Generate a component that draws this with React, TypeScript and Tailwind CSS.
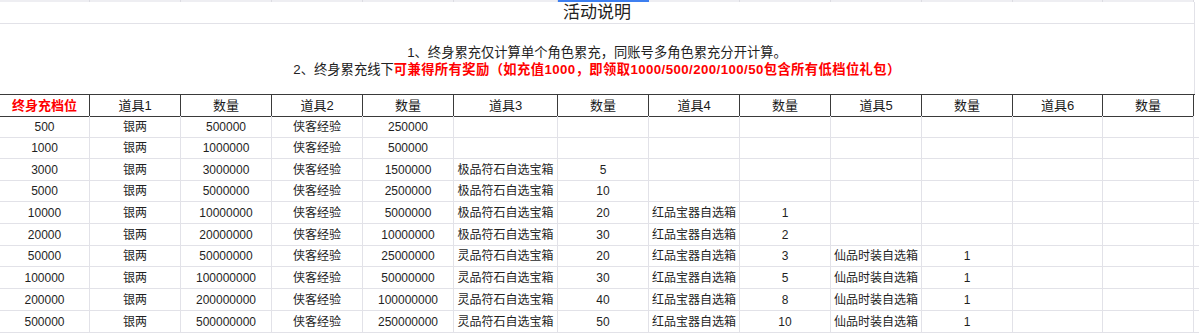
import React from "react";

const widths = [90, 91, 91, 91, 91, 104, 91, 91, 91, 91, 91, 90, 91];
const headers = ["终身充档位", "道具1", "数量", "道具2", "数量", "道具3", "数量", "道具4", "数量", "道具5", "数量", "道具6", "数量"];
const heights = [22, 21, 22, 21, 22, 22, 21, 22, 22, 22];

const J = "极品符石自选宝箱";
const L = "灵品符石自选宝箱";
const H = "红品宝器自选箱";
const X = "仙品时装自选箱";

const rows: string[][] = [
  ["500", "银两", "500000", "侠客经验", "250000"],
  ["1000", "银两", "1000000", "侠客经验", "500000"],
  ["3000", "银两", "3000000", "侠客经验", "1500000", J, "5"],
  ["5000", "银两", "5000000", "侠客经验", "2500000", J, "10"],
  ["10000", "银两", "10000000", "侠客经验", "5000000", J, "20", H, "1"],
  ["20000", "银两", "20000000", "侠客经验", "10000000", J, "30", H, "2"],
  ["50000", "银两", "50000000", "侠客经验", "25000000", L, "20", H, "3", X, "1"],
  ["100000", "银两", "100000000", "侠客经验", "50000000", L, "30", H, "5", X, "1"],
  ["200000", "银两", "200000000", "侠客经验", "100000000", L, "40", H, "8", X, "1"],
  ["500000", "银两", "500000000", "侠客经验", "250000000", L, "50", H, "10", X, "1"],
];

const font = { fontFamily: '"Liberation Sans", "Noto Sans CJK SC", sans-serif' };

export default function App() {
  return (
    <div className="w-[1199px] h-[336px] overflow-hidden bg-white text-[#1f1f1f]" style={font}>
      {/* column strip */}
      <div className="flex h-[2px]">
        {widths.map((w, i) => (
          <div
            key={i}
            style={{ width: w }}
            className={i === 6 ? "h-[2px] bg-[#3d7ff0]" : "h-[2px] bg-[#eeeef2] border-r border-[#dcdce2]"}
          />
        ))}
      </div>
      {/* title */}
      <div className="w-[1195px] h-[22px] border-b border-r border-[#e2e2e8] flex items-center justify-center text-[17px] leading-none text-[#222]">
        活动说明
      </div>
      {/* notes */}
      <div className="w-[1195px] h-[70px] border-r border-[#e2e2e8] flex flex-col items-center justify-center pt-[3px] text-[13.3px] leading-[17px] text-[#222]">
        <div>1、终身累充仅计算单个角色累充，同账号多角色累充分开计算。</div>
        <div>
          2、终身累充线下
          <span className="font-bold text-[#ff0000] tracking-[0.4px]">
            可兼得所有奖励（如充值1000，即领取1000/500/200/100/50包含所有低档位礼包）
          </span>
        </div>
      </div>
      {/* header */}
      <div className="flex h-[22px] w-[1195px] border-t border-[#3a3a3a]">
        {headers.map((h, i) => (
          <div
            key={i}
            style={{ width: widths[i] }}
            className={
              "h-[22px] border-r border-b border-[#3a3a3a] flex items-center justify-center text-[13px] leading-none " +
              (i === 0 ? "font-bold text-[#ff0000]" : "text-[#1a1a1a]")
            }
          >
            {h}
          </div>
        ))}
      </div>
      {/* data */}
      {rows.map((r, ri) => (
        <div key={ri} className="flex w-[1199px]" style={{ height: heights[ri] }}>
          {widths.map((w, ci) => (
            <div
              key={ci}
              style={{ width: w }}
              className="h-full shrink-0 border-r border-b border-[#e2e2e8] flex items-center justify-center text-[12px] leading-none whitespace-nowrap"
            >
              {r[ci] ?? ""}
            </div>
          ))}
          <div className="h-full flex-1 border-b border-[#e2e2e8]" />
        </div>
      ))}
    </div>
  );
}
